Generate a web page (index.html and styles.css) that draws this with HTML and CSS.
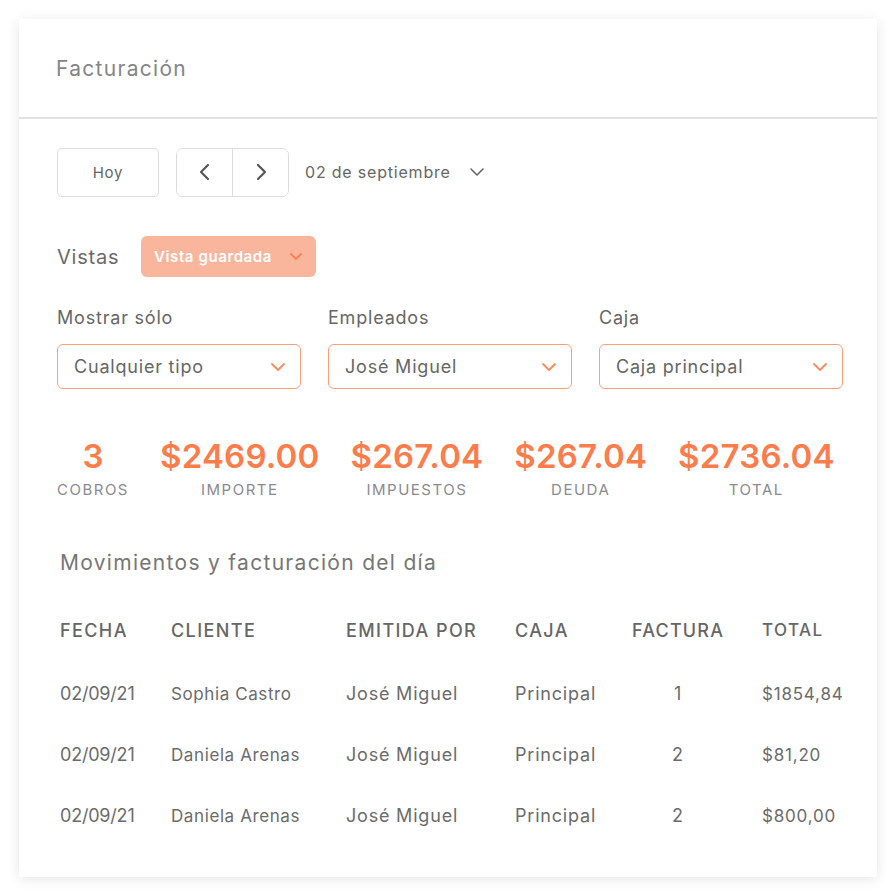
FILE: index.html
```html
<!DOCTYPE html>
<html lang="es">
<head>
<meta charset="utf-8">
<title>Facturación</title>
<link rel="stylesheet" href="styles.css">
</head>
<body>
<div class="card">
  <div class="card-header">Facturación</div>
  <div class="card-body">
    <div class="toolbar">
      <button class="btn-today">Hoy</button>
      <div class="nav-group">
        <button class="nav-btn"><svg width="14" height="18" viewBox="0 0 14 18"><path d="M10 2 L3 9 L10 16" fill="none" stroke="#555" stroke-width="2.2" stroke-linecap="round" stroke-linejoin="round"/></svg></button>
        <button class="nav-btn"><svg width="14" height="18" viewBox="0 0 14 18"><path d="M4 2 L11 9 L4 16" fill="none" stroke="#555" stroke-width="2.2" stroke-linecap="round" stroke-linejoin="round"/></svg></button>
      </div>
      <div class="date-pick">02 de septiembre <svg width="16" height="10" viewBox="0 0 16 10"><path d="M2 2 L8 8 L14 2" fill="none" stroke="#666" stroke-width="1.6" stroke-linecap="round" stroke-linejoin="round"/></svg></div>
    </div>

    <div class="views">
      <span class="views-label">Vistas</span>
      <button class="saved-view">Vista guardada <svg width="14" height="9" viewBox="0 0 14 9"><path d="M2 2 L7 7 L12 2" fill="none" stroke="#ff7f50" stroke-width="1.8" stroke-linecap="round" stroke-linejoin="round"/></svg></button>
    </div>

    <div class="filters">
      <div class="filter">
        <div class="filter-label">Mostrar sólo</div>
        <div class="select"><span>Cualquier tipo</span><svg width="16" height="10" viewBox="0 0 16 10"><path d="M2 2 L8 8 L14 2" fill="none" stroke="#ff8a5c" stroke-width="1.8" stroke-linecap="round" stroke-linejoin="round"/></svg></div>
      </div>
      <div class="filter">
        <div class="filter-label">Empleados</div>
        <div class="select"><span>José Miguel</span><svg width="16" height="10" viewBox="0 0 16 10"><path d="M2 2 L8 8 L14 2" fill="none" stroke="#ff8a5c" stroke-width="1.8" stroke-linecap="round" stroke-linejoin="round"/></svg></div>
      </div>
      <div class="filter">
        <div class="filter-label">Caja</div>
        <div class="select"><span>Caja principal</span><svg width="16" height="10" viewBox="0 0 16 10"><path d="M2 2 L8 8 L14 2" fill="none" stroke="#ff8a5c" stroke-width="1.8" stroke-linecap="round" stroke-linejoin="round"/></svg></div>
      </div>
    </div>

    <div class="stats">
      <div class="stat"><div class="stat-value">3</div><div class="stat-label">COBROS</div></div>
      <div class="stat"><div class="stat-value">$2469.00</div><div class="stat-label">IMPORTE</div></div>
      <div class="stat"><div class="stat-value">$267.04</div><div class="stat-label">IMPUESTOS</div></div>
      <div class="stat"><div class="stat-value">$267.04</div><div class="stat-label">DEUDA</div></div>
      <div class="stat"><div class="stat-value">$2736.04</div><div class="stat-label">TOTAL</div></div>
    </div>

    <div class="section-title">Movimientos y facturación del día</div>

    <div class="table">
      <div class="row head">
        <div>FECHA</div><div>CLIENTE</div><div>EMITIDA POR</div><div>CAJA</div><div class="c">FACTURA</div><div class="t">TOTAL</div>
      </div>
      <div class="row">
        <div class="date">02/09/21</div><div class="client">Sophia Castro</div><div>José Miguel</div><div>Principal</div><div class="c">1</div><div class="t">$1854,84</div>
      </div>
      <div class="row">
        <div class="date">02/09/21</div><div class="client">Daniela Arenas</div><div>José Miguel</div><div>Principal</div><div class="c">2</div><div class="t">$81,20</div>
      </div>
      <div class="row">
        <div class="date">02/09/21</div><div class="client">Daniela Arenas</div><div>José Miguel</div><div>Principal</div><div class="c">2</div><div class="t">$800,00</div>
      </div>
    </div>
  </div>
</div>
</body>
</html>
```

FILE: styles.css
```css
* { box-sizing: border-box; }
html, body { margin: 0; padding: 0; background: #ffffff; }
body {
  font-family: Inter, "DejaVu Sans", sans-serif;
  color: #6b6b6b;
  width: 896px;
  height: 896px;
  overflow: hidden;
  letter-spacing: 0.05em;
}
button { font-family: inherit; cursor: pointer; letter-spacing: inherit; }

.card {
  margin: 19px;
  width: 858px;
  height: 858px;
  background: #fff;
  box-shadow: 0 2px 12px rgba(0,0,0,0.10);
}
.card-header {
  height: 100px;
  display: flex;
  align-items: center;
  padding-left: 37px;
  font-size: 21px;
  letter-spacing: 1.3px;
  color: #858585;
  border-bottom: 2px solid #e2e2e2;
}
.card-body { padding: 28px 0 0 38px; }

.toolbar { display: flex; align-items: center; height: 50px; }
.btn-today {
  width: 102px; height: 49px;
  border: 1.5px solid #dcdcdc; border-radius: 5px; background: #fff;
  font-size: 15px; color: #666;
}
.nav-group {
  margin-left: 17px;
  display: flex;
  width: 113px; height: 49px;
  border: 1.5px solid #dcdcdc; border-radius: 7px;
  overflow: hidden;
}
.nav-btn {
  flex: 1; border: none; background: #fff;
  display: flex; align-items: center; justify-content: center;
  padding: 0;
}
.nav-btn + .nav-btn { border-left: 1.5px solid #dcdcdc; }
.date-pick {
  margin-left: 16px;
  font-size: 16px; letter-spacing: 0.8px; color: #666;
  display: flex; align-items: center; gap: 18px;
}

.views { display: flex; align-items: center; margin-top: 39px; height: 41px; }
.views-label { font-size: 20px; color: #6a6a6a; width: 84px; }
.saved-view {
  height: 41px; width: 175px;
  background: #fab69c; border: none; border-radius: 6px;
  color: #fff; font-weight: 600; font-size: 15px; letter-spacing: 0.6px;
  display: flex; align-items: center; justify-content: space-between;
  padding: 0 13px 0 13px;
}

.filters { display: flex; gap: 27px; margin-top: 28px; }
.filter { width: 244px; }
.filter-label { font-size: 18px; color: #666; height: 26px; line-height: 26px; }
.select {
  margin-top: 13px;
  height: 45px;
  border: 1.5px solid #ff9e7b; border-radius: 6px;
  display: flex; align-items: center; justify-content: space-between;
  padding: 0 14px 0 16px;
  font-size: 18px; color: #666;
}

.stats { display: flex; gap: 31px; margin-top: 47px; }
.stat { display: flex; flex-direction: column; align-items: center; }
.stat-value { font-size: 33px; font-weight: 600; color: #fd7c4b; line-height: 40px; letter-spacing: 0.2px; }
.stat-label { font-size: 15px; color: #8a8a90; line-height: 20px; margin-top: 4px; letter-spacing: 1.5px; }

.section-title { margin-top: 48px; margin-left: 3px; font-size: 21px; letter-spacing: 1.3px; color: #767676; line-height: 30px; }

.table { margin-top: 35px; margin-left: 3px; }
.row {
  display: grid;
  grid-template-columns: 111px 175px 169px 117px 92px 1fr;
  height: 61px;
  align-items: center;
  font-size: 18px;
  color: #6b6b6b;
}
.row.head { font-weight: 500; height: 34px; margin-bottom: 16px; color: #666; letter-spacing: 1.4px; }
.row.head .c { letter-spacing: 1.2px; }
.row .c { text-align: center; }
.row .t { padding-left: 38px; font-size: 17px; }
.row .date { letter-spacing: -0.2px; }
.row .client { font-size: 17px; letter-spacing: 0.6px; }
```
